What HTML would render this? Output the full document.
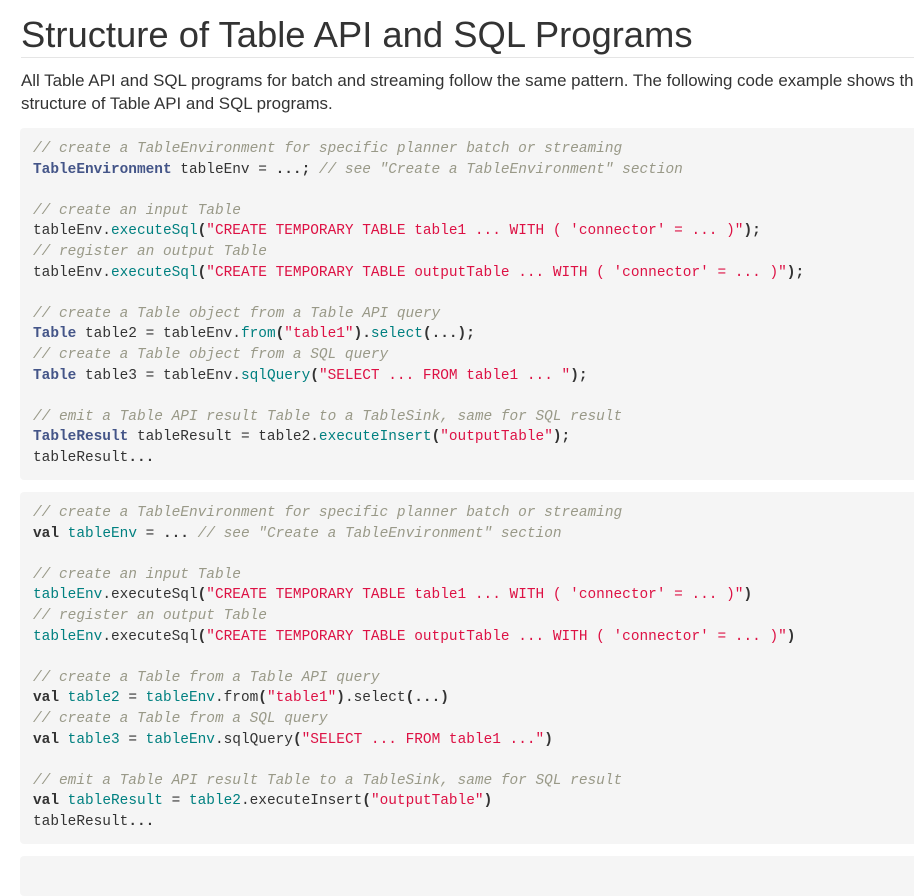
<!DOCTYPE html>
<html><head><meta charset="utf-8"><style>
body{margin:0;background:#fff;width:914px;height:862px;overflow:hidden;font-family:"Liberation Sans",Arial,sans-serif;color:#333}
h1{position:absolute;left:21px;top:13px;margin:0;font-size:36.4px;font-weight:normal;line-height:44px;width:893px;border-bottom:1px solid #e5e5e5;padding-bottom:0}
p{position:absolute;left:21px;top:69px;margin:0;font-size:16.9px;line-height:23px;width:960px;white-space:nowrap}
pre{position:absolute;left:20px;width:920px;margin:0;background:#f5f5f5;border-radius:4px;padding:11px 13px;box-sizing:border-box;font-family:"Liberation Mono","DejaVu Sans Mono",monospace;font-size:14.45px;line-height:20.6px;color:#333}
.c{color:#998;font-style:italic}.t{color:#458;font-weight:bold}.f{color:#008080}.s{color:#d14}.k{font-weight:bold;color:#333}.b{font-weight:bold}
</style></head><body>
<h1>Structure of Table API and SQL Programs</h1>
<p>All Table API and SQL programs for batch and streaming follow the same pattern. The following code example shows the<br>structure of Table API and SQL programs.</p>
<pre style="top:128px;height:352px"><span class="c">// create a TableEnvironment for specific planner batch or streaming</span>
<span class="t">TableEnvironment</span> tableEnv = <span class="b">...;</span> <span class="c">// see "Create a TableEnvironment" section</span>

<span class="c">// create an input Table</span>
tableEnv.<span class="f">executeSql</span><span class="b">(</span><span class="s">"CREATE TEMPORARY TABLE table1 ... WITH ( 'connector' = ... )"</span><span class="b">);</span>
<span class="c">// register an output Table</span>
tableEnv.<span class="f">executeSql</span><span class="b">(</span><span class="s">"CREATE TEMPORARY TABLE outputTable ... WITH ( 'connector' = ... )"</span><span class="b">);</span>

<span class="c">// create a Table object from a Table API query</span>
<span class="t">Table</span> table2 = tableEnv.<span class="f">from</span><span class="b">(</span><span class="s">"table1"</span><span class="b">).</span><span class="f">select</span><span class="b">(...);</span>
<span class="c">// create a Table object from a SQL query</span>
<span class="t">Table</span> table3 = tableEnv.<span class="f">sqlQuery</span><span class="b">(</span><span class="s">"SELECT ... FROM table1 ... "</span><span class="b">);</span>

<span class="c">// emit a Table API result Table to a TableSink, same for SQL result</span>
<span class="t">TableResult</span> tableResult = table2.<span class="f">executeInsert</span><span class="b">(</span><span class="s">"outputTable"</span><span class="b">);</span>
tableResult<span class="b">...</span></pre>
<pre style="top:492px;height:352px"><span class="c">// create a TableEnvironment for specific planner batch or streaming</span>
<span class="k">val</span> <span class="f">tableEnv</span> = <span class="b">...</span> <span class="c">// see "Create a TableEnvironment" section</span>

<span class="c">// create an input Table</span>
<span class="f">tableEnv</span>.executeSql<span class="b">(</span><span class="s">"CREATE TEMPORARY TABLE table1 ... WITH ( 'connector' = ... )"</span><span class="b">)</span>
<span class="c">// register an output Table</span>
<span class="f">tableEnv</span>.executeSql<span class="b">(</span><span class="s">"CREATE TEMPORARY TABLE outputTable ... WITH ( 'connector' = ... )"</span><span class="b">)</span>

<span class="c">// create a Table from a Table API query</span>
<span class="k">val</span> <span class="f">table2</span> = <span class="f">tableEnv</span>.from<span class="b">(</span><span class="s">"table1"</span><span class="b">)</span>.select<span class="b">(...)</span>
<span class="c">// create a Table from a SQL query</span>
<span class="k">val</span> <span class="f">table3</span> = <span class="f">tableEnv</span>.sqlQuery<span class="b">(</span><span class="s">"SELECT ... FROM table1 ..."</span><span class="b">)</span>

<span class="c">// emit a Table API result Table to a TableSink, same for SQL result</span>
<span class="k">val</span> <span class="f">tableResult</span> = <span class="f">table2</span>.executeInsert<span class="b">(</span><span class="s">"outputTable"</span><span class="b">)</span>
tableResult<span class="b">...</span></pre>
<pre style="top:856px;height:40px"></pre>
</body></html>
